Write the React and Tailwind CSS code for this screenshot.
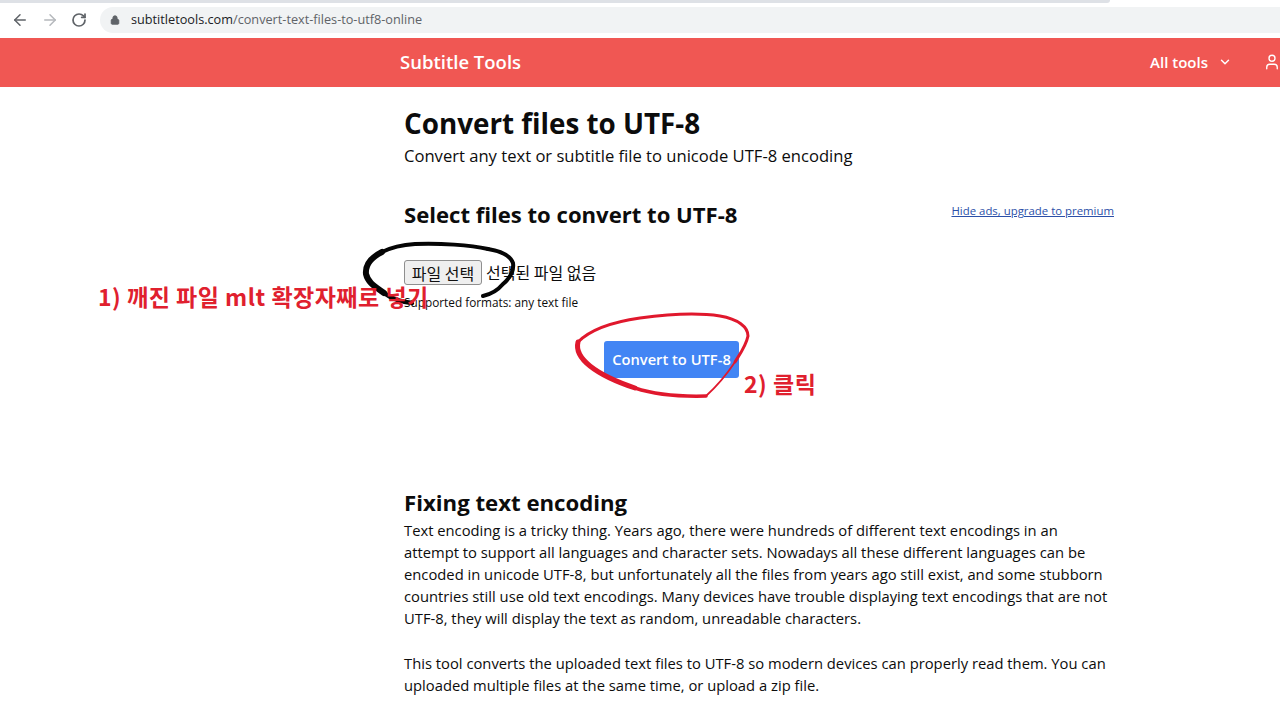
import { ArrowLeft, ArrowRight, RotateCw, Lock, ChevronDown, User } from "lucide-react";

const App = () => {
  return (
    <div className="relative h-[719px] w-[1280px] overflow-hidden bg-white font-['Open_Sans',sans-serif] text-[#0c0c0c]">
      {/* browser chrome */}
      <div className="h-[3px] bg-white">
        <div className="h-[3px] w-[1110px] rounded-br-md bg-[#dee1e6]"></div>
      </div>
      <div className="flex h-[34px] items-center bg-white pl-[11px]">
        <ArrowLeft size={18} strokeWidth={2} className="text-[#5f6368]" />
        <ArrowRight size={18} strokeWidth={2} className="ml-[12px] text-[#b5b8bc]" />
        <RotateCw size={16} strokeWidth={2.6} className="ml-[12px] text-[#5f6368]" />
        <div className="ml-[13px] flex h-[26px] flex-1 items-center rounded-l-full bg-[#f1f3f4] pl-[10px] text-[12.7px]">
          <Lock size={10} fill="#5f6368" strokeWidth={2.4} className="text-[#5f6368]" />
          <span className="ml-[11px] text-[#202124]">subtitletools.com</span>
          <span className="text-[#5f6368]">/convert-text-files-to-utf8-online</span>
        </div>
      </div>

      {/* site nav */}
      <nav className="mt-[1px] flex h-[49px] items-center bg-[#f05753] pb-[1px] pl-[400px] font-semibold text-white">
        <span className="text-[18.5px]">Subtitle Tools</span>
        <div className="ml-auto flex items-center text-[15px]">
          <span>All tools</span>
          <ChevronDown size={14} strokeWidth={2.5} className="ml-[10px]" />
          <User size={18} strokeWidth={1.8} className="ml-[31px] mr-[-1px]" />
        </div>
      </nav>

      {/* page content */}
      <main className="ml-[404px] w-[710px]">
        <h1 className="mt-[17px] text-[27.8px] leading-[38px] font-bold">Convert files to UTF-8</h1>
        <p className="mt-[2px] text-[16.6px] leading-[24px]">Convert any text or subtitle file to unicode UTF-8 encoding</p>

        <div className="mt-[31px] flex items-start justify-between">
          <h2 className="text-[22.1px] leading-[30px] font-bold">Select files to convert to UTF-8</h2>
          <a className="mt-[3px] text-[11.4px] text-[#2b4fa8] underline">Hide ads, upgrade to premium</a>
        </div>

        <div className="mt-[30px] flex h-[26px] items-center font-['Noto_Sans_CJK_KR',sans-serif] text-[16px]">
          <button className="h-[25px] w-[78px] rounded-[3px] border border-[#8f8f8f] bg-[#efefef] text-[#111]">파일 선택</button>
          <span className="ml-[4px]">선택된 파일 없음</span>
        </div>
        <p className="mt-[9px] text-[11.8px] leading-[16px]">Supported formats: any text file</p>

        <div className="mt-[31px] ml-[200px]">
          <button className="h-[37px] w-[135px] rounded-[3px] bg-[#4285f4] pb-[1px] text-[14.7px] font-semibold text-white">Convert to UTF-8</button>
        </div>

        <h2 className="mt-[110px] text-[22.2px] leading-[30px] font-bold">Fixing text encoding</h2>
        <p className="mt-[1px] text-[14.78px] leading-[22px]">
          Text encoding is a tricky thing. Years ago, there were hundreds of different text encodings in an
          attempt to support all languages and character sets. Nowadays all these different languages can be
          encoded in unicode UTF-8, but unfortunately all the files from years ago still exist, and some stubborn
          countries still use old text encodings. Many devices have trouble displaying text encodings that are not
          UTF-8, they will display the text as random, unreadable characters.
        </p>
        <p className="mt-[23px] text-[14.78px] leading-[22px]">
          This tool converts the uploaded text files to UTF-8 so modern devices can properly read them. You can
          uploaded multiple files at the same time, or upload a zip file.
        </p>
      </main>

      {/* hand drawn annotations on top of the page */}
      <svg className="absolute top-0 left-0" width="1280" height="719" fill="none" strokeLinecap="round">
        <path d="M483 296 C492 294 498 290 503 284 C510 278 514 270 513 263 C510 255 500 251 488 249" stroke="#050505" strokeWidth="4" />
        <path d="M488 249 C470 245 440 243 415 244 C400 245 390 248 382 252" stroke="#050505" strokeWidth="4" />
        <path d="M382 252 C372 257 365 264 366 274 C368 283 376 287 384 293" stroke="#050505" strokeWidth="6" />
        <path d="M384 293 C392 299 402 302 412 303" stroke="#050505" strokeWidth="4.5" />
        <path d="M578 342 C590 330 612 322 640 318 C670 314 700 313 720 316 C738 319 748 327 748 336 C746 346 740 354 735 362" stroke="#e0182d" strokeWidth="3" />
        <path d="M735 362 C727 374 717 386 706 396" stroke="#e0182d" strokeWidth="1.8" />
        <path d="M578 342 C576 350 580 358 590 366 C600 374 614 381 635 388" stroke="#e0182d" strokeWidth="5" />
        <path d="M635 388 C650 393 670 397 706 396" stroke="#e0182d" strokeWidth="3.5" />
      </svg>
      <span className="absolute top-[280px] left-[98px] font-['Noto_Sans_CJK_KR',sans-serif] text-[23px] leading-[32px] font-bold tracking-[0.5px] whitespace-nowrap text-[#e0202e]">
        1) 깨진 파일 mlt 확장자째로 넣기
      </span>
      <span className="absolute top-[367px] left-[744px] font-['Noto_Sans_CJK_KR',sans-serif] text-[23px] leading-[32px] font-bold tracking-[0.5px] whitespace-nowrap text-[#e0202e]">
        2) 클릭
      </span>
    </div>
  );
};

export default App;
